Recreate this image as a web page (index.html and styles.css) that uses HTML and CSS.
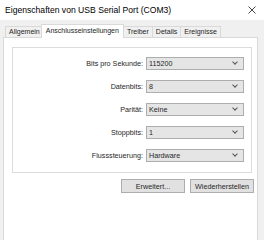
FILE: index.html
```html
<!DOCTYPE html>
<html lang="de">
<head>
  <meta charset="UTF-8" />
  <title>Eigenschaften von USB Serial Port (COM3)</title>
  <link rel="stylesheet" href="styles.css">
</head>
<body>
  <div class="dialog">
    <div class="titlebar">
      <span class="title">Eigenschaften von USB Serial Port (COM3)</span>
      <svg class="close" viewBox="0 0 8 8" width="8" height="8"><path d="M0.5 0.5L7.5 7.5M7.5 0.5L0.5 7.5" stroke="#333" stroke-width="0.9" fill="none"/></svg>
    </div>

    <div class="tabs">
      <div class="tab">Allgemein</div>
      <div class="tab active">Anschlusseinstellungen</div>
      <div class="tab">Treiber</div>
      <div class="tab">Details</div>
      <div class="tab">Ereignisse</div>
    </div>

    <div class="panel">
      <div class="group">
        <label>Bits pro Sekunde:</label>
        <div class="combo">115200<span class="arrow"></span></div>
        <label>Datenbits:</label>
        <div class="combo">8<span class="arrow"></span></div>
        <label>Parität:</label>
        <div class="combo">Keine<span class="arrow"></span></div>
        <label>Stoppbits:</label>
        <div class="combo">1<span class="arrow"></span></div>
        <label>Flusssteuerung:</label>
        <div class="combo">Hardware<span class="arrow"></span></div>
      </div>
      <div class="buttons">
        <button>Erweitert...</button>
        <button>Wiederherstellen</button>
      </div>
    </div>
  </div>
</body>
</html>
```

FILE: styles.css
```css
/* Dialog */
body { margin: 0; font-family: 'Liberation Sans', Arial, sans-serif; font-size: 7.2px; color: #262626; background: #f0f0f0; overflow: hidden; }
.dialog { width: 264px; height: 240px; background: #f0f0f0; }

/* Titelleiste */
.titlebar {
  display: flex; justify-content: space-between; align-items: center;
  height: 20px; padding: 0 8px 0 5px; background: #fff; box-sizing: border-box;
}
.title { font-size: 8.6px; color: #000; }
.close { display: block; }

/* Reiter */
.tabs { display: flex; align-items: flex-end; height: 17px; padding-left: 5px; font-size: 7px; }
.tab {
  height: 10px; line-height: 10px; padding: 0 3px; border: 1px solid #d9d9d9; border-bottom: none;
  margin-right: -1px; background: #f0f0f0; position: relative;
}
.tab.active {
  height: 13px; line-height: 12px; background: #fff; margin: 0 -1px 0 -2px; padding: 0 4px;
  z-index: 1; top: 1px;
}

/* Seite */
.panel {
  margin: 0 6px 0 3px; height: 210px; background: #fff; border: 1px solid #d9d9d9;
  padding: 9px 6px 0 8px; box-sizing: border-box;
}
.group {
  display: grid; grid-template-columns: 130px 98px; column-gap: 3px; row-gap: 10px;
  align-items: center; border: 1px solid #dcdcdc; padding: 9px 0 10px 0; width: 240px; box-sizing: border-box;
}
.group label { text-align: right; }
.combo {
  position: relative; height: 13px; line-height: 11px; padding-left: 2px; box-sizing: border-box;
  background: #e5e5e5; border: 1px solid #adadad;
}
.arrow {
  position: absolute; right: 6px; top: 2px; width: 3px; height: 3px;
  border-right: 1px solid #555; border-bottom: 1px solid #555; transform: rotate(45deg);
}

/* Schaltflächen */
.buttons { display: flex; justify-content: flex-end; gap: 5px; margin-top: 6px; width: 242px; }
.buttons button {
  width: 64px; height: 14px; padding: 0; font: inherit; color: #262626;
  background: #e1e1e1; border: 1px solid #adadad;
}
```
